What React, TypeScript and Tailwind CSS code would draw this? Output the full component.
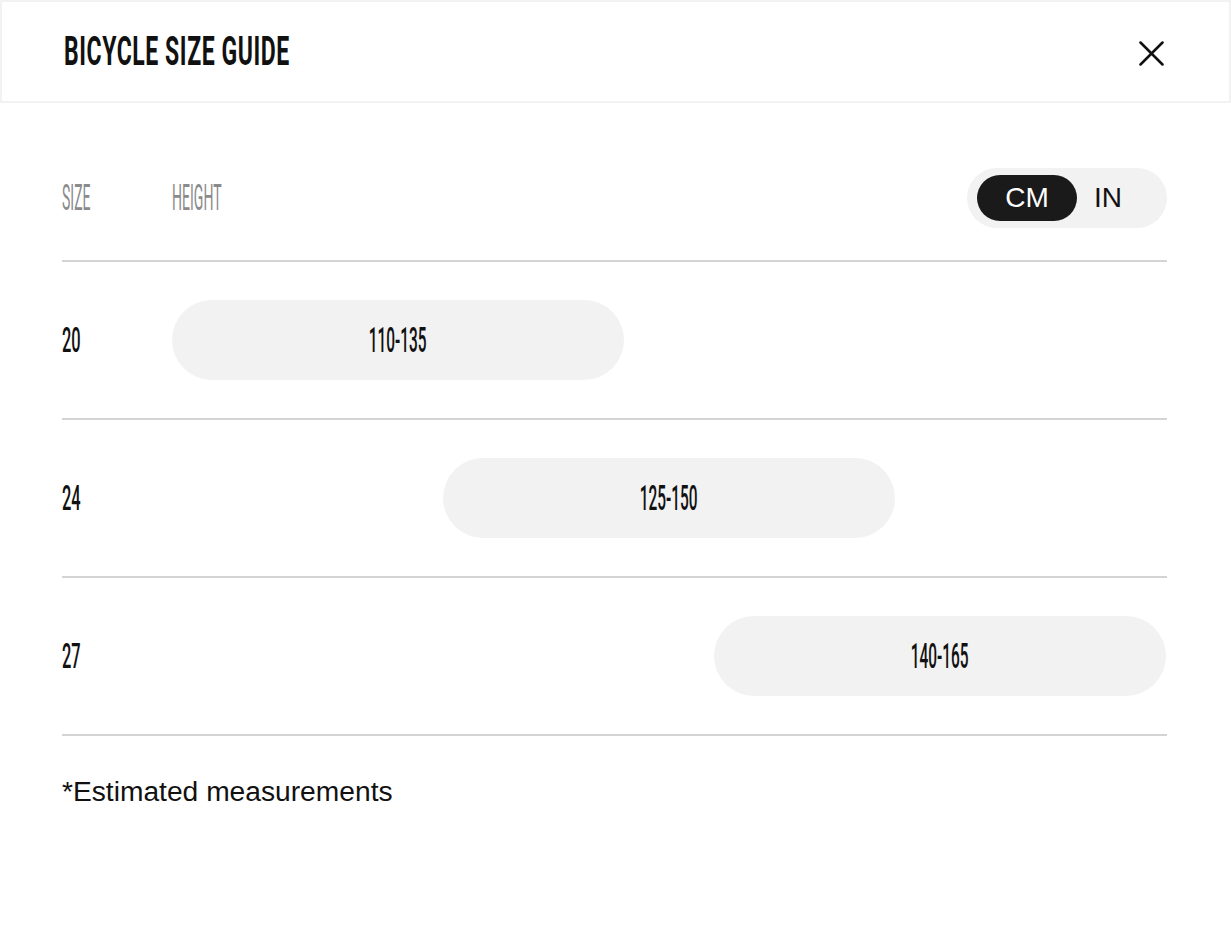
const rows = [
  { size: "20", range: "110-135", offset: "ml-0" },
  { size: "24", range: "125-150", offset: "ml-[271px]" },
  { size: "27", range: "140-165", offset: "ml-[542px]" },
];

const Narrow = ({ children, className = "" }: { children: React.ReactNode; className?: string }) => (
  <span className={`inline-block whitespace-nowrap ${className}`}>{children}</span>
);

export default function App() {
  return (
    <div className="w-[1231px] h-[937px] bg-white font-['Roboto',sans-serif] text-[#111]">
      {/* header */}
      <div className="h-[103px] border-2 border-[#f2f2f2] flex items-center justify-between pl-[62px] pr-[64px]">
        <h1 className="text-[40px] leading-none font-bold tracking-[1px]">
          <Narrow className="scale-x-[0.575] origin-left">BICYCLE SIZE GUIDE</Narrow>
        </h1>
        <button className="w-[28px] h-[28px] mt-[4px] flex items-center justify-center">
          <svg width="25" height="25" viewBox="0 0 25 25" fill="none" stroke="#111" strokeWidth="2.5" strokeLinecap="round">
            <path d="M1.5 1.5 L23.5 23.5" />
            <path d="M23.5 1.5 L1.5 23.5" />
          </svg>
        </button>
      </div>

      <div className="pl-[62px] pr-[64px] pt-[65px]">
        {/* column header + unit toggle */}
        <div className="h-[60px] flex items-center justify-between">
          <div className="flex items-center text-[36px] leading-none text-[#8a8a8a]">
            <div className="w-[110px]">
              <Narrow className="scale-x-[0.39] origin-left">SIZE</Narrow>
            </div>
            <Narrow className="scale-x-[0.39] origin-left">HEIGHT</Narrow>
          </div>
          <div className="w-[200px] h-[60px] rounded-full bg-[#f2f2f2] flex items-center pl-[10px] font-['Liberation_Sans',sans-serif] text-[28px]">
            <div className="w-[100px] h-[46px] rounded-full bg-[#1a1a1a] text-white flex items-center justify-center">
              CM
            </div>
            <div className="ml-[17px] text-[#111]">IN</div>
          </div>
        </div>

        <div className="mt-[32px] border-t-2 border-[#d4d4d4]">
          {rows.map((r) => (
            <div key={r.size} className="h-[158px] border-b-2 border-[#d4d4d4] flex items-center">
              <div className="w-[110px] text-[35px] leading-none font-medium">
                <Narrow className="scale-x-[0.47] origin-left">{r.size}</Narrow>
              </div>
              <div className="flex-1 flex">
                <div
                  className={`${r.offset} w-[452px] h-[80px] rounded-full bg-[#f2f2f2] flex items-center justify-center text-[35px] leading-none font-medium`}
                >
                  <Narrow className="scale-x-[0.44] origin-center">{r.range}</Narrow>
                </div>
              </div>
            </div>
          ))}
        </div>

        <p className="mt-[39px] font-['Liberation_Sans',sans-serif] text-[28.2px] leading-[32px] text-[#111]">
          *Estimated measurements
        </p>
      </div>
    </div>
  );
}
